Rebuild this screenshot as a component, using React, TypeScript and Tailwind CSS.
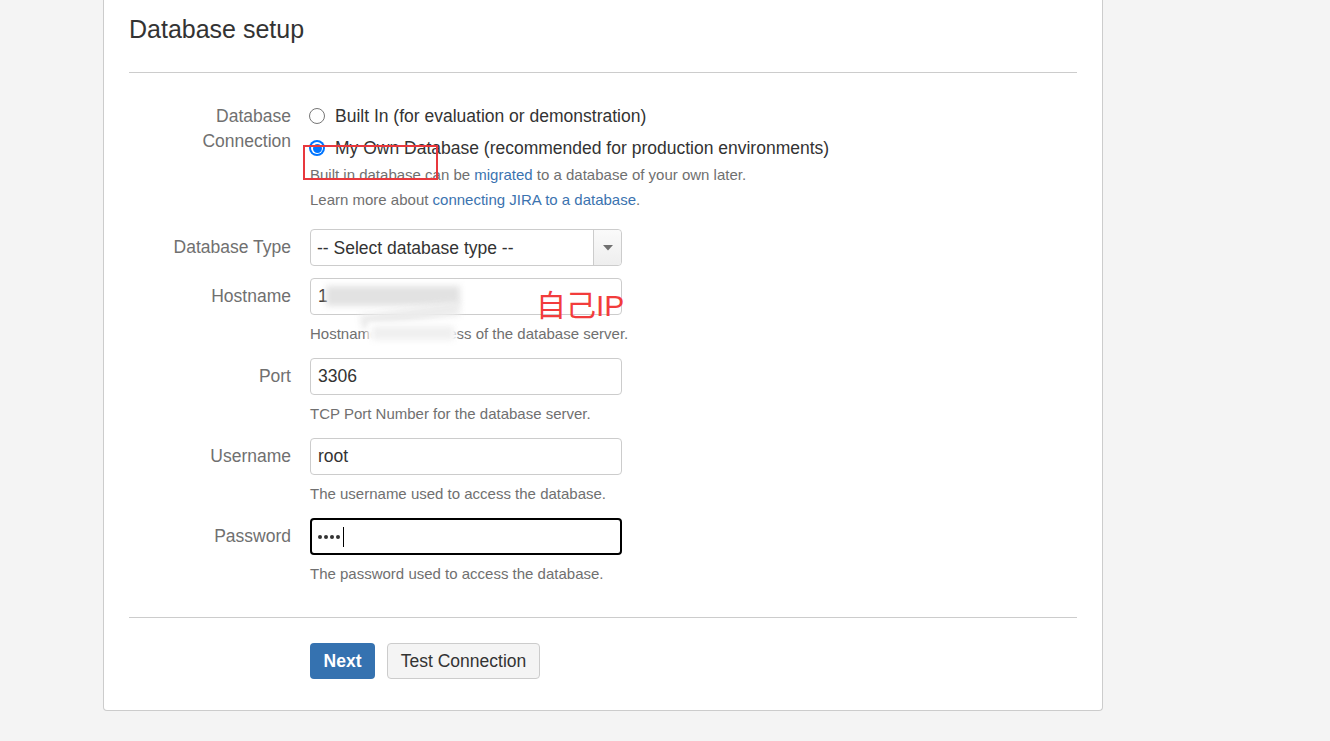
import React from "react";

const font = { fontFamily: '"Liberation Sans", Arial, "Noto Sans CJK SC", sans-serif' };

function Radio({ checked }: { checked?: boolean }) {
  return checked ? (
    <span className="flex h-[16px] w-[16px] shrink-0 items-center justify-center rounded-full bg-[#0075ff]">
      <span className="flex h-[12px] w-[12px] items-center justify-center rounded-full bg-white">
        <span className="h-[9px] w-[9px] rounded-full bg-[#0075ff]" />
      </span>
    </span>
  ) : (
    <span className="h-[16px] w-[16px] shrink-0 rounded-full border border-[#767676] bg-white" />
  );
}

function Label({ children }: { children: React.ReactNode }) {
  return (
    <div className="w-[162px] shrink-0 text-right text-[17.5px] leading-[25px] text-[#707070]">{children}</div>
  );
}

function Field({
  label,
  help,
  children,
}: {
  label: string;
  help?: React.ReactNode;
  children: React.ReactNode;
}) {
  return (
    <div className="mb-[12px] flex">
      <div className="pt-[6px]">
        <Label>{label}</Label>
      </div>
      <div className="ml-[19px] w-[312px]">
        {children}
        {help && (
          <div className="mt-[6px] whitespace-nowrap text-[15px] leading-[25px] text-[#707070]">{help}</div>
        )}
      </div>
    </div>
  );
}

function TextInput({ value }: { value: string }) {
  return (
    <div className="flex h-[37px] w-[312px] items-center rounded-[4px] border border-[#cccccc] bg-white pl-[7px] text-[17.5px] text-[#333333]">
      {value}
    </div>
  );
}

export default function App() {
  return (
    <div className="relative min-h-[741px] w-full overflow-hidden bg-[#f4f4f4]" style={font}>
      <div className="ml-[103px] w-[1000px] rounded-b-[4px] border-x border-b border-[#cccccc] bg-white px-[25px] pt-[14px] pb-[31px]">
        <h1 className="text-[25px] leading-[30px] font-normal text-[#333333]">Database setup</h1>
        <div className="mt-[28px] h-px w-full bg-[#cccccc]" />

        <div className="mt-[27px] flex">
          <div className="pt-[4px]">
            <Label>
              Database
              <br />
              Connection
            </Label>
          </div>
          <div className="ml-[18px]">
            <div className="flex h-[32px] items-center gap-[10px] text-[17.5px] text-[#333333]">
              <Radio />
              <span>Built In (for evaluation or demonstration)</span>
            </div>
            <div className="flex h-[32px] items-center gap-[10px] text-[17.5px] text-[#333333]">
              <Radio checked />
              <span>My Own Database (recommended for production environments)</span>
            </div>
            <div className="-mt-[2px] pl-[1px] text-[15px] leading-[25px] text-[#707070]">
              <div>
                Built in database can be <span className="text-[#3b73af]">migrated</span> to a database of your own later.
              </div>
              <div>
                Learn more about <span className="text-[#3b73af]">connecting JIRA to a database</span>.
              </div>
            </div>
          </div>
        </div>

        <div className="mt-[17px]">
          <Field label="Database Type">
            <div className="flex h-[37px] w-[312px] items-stretch rounded-[4px] border border-[#cccccc] bg-white">
              <div className="flex flex-1 items-center pl-[6px] pt-[1px] text-[17.5px] text-[#333333]">-- Select database type --</div>
              <div className="flex w-[28px] items-center justify-center rounded-r-[4px] border-l border-[#cccccc] bg-gradient-to-b from-[#fafafa] to-[#eeeeee]">
                <svg width="10" height="6" viewBox="0 0 10 6">
                  <path d="M0 0 L10 0 L5 5.5 Z" fill="#707070" />
                </svg>
              </div>
            </div>
          </Field>
          <Field label="Hostname" help="Hostname or IP address of the database server.">
            <TextInput value="1" />
          </Field>
          <Field label="Port" help="TCP Port Number for the database server.">
            <TextInput value="3306" />
          </Field>
          <Field label="Username" help="The username used to access the database.">
            <TextInput value="root" />
          </Field>
          <Field label="Password" help="The password used to access the database.">
            <div className="flex h-[37px] w-[312px] items-center gap-[2px] rounded-[4px] border-2 border-black bg-white pl-[6px]">
              <span className="h-[4px] w-[4px] rounded-full bg-[#333333]" />
              <span className="h-[4px] w-[4px] rounded-full bg-[#333333]" />
              <span className="h-[4px] w-[4px] rounded-full bg-[#333333]" />
              <span className="h-[4px] w-[4px] rounded-full bg-[#333333]" />
              <span className="ml-[1px] h-[20px] w-px bg-black" />
            </div>
          </Field>
        </div>

        <div className="mt-[31px] h-px w-full bg-[#cccccc]" />

        <div className="mt-[25px] flex pl-[181px]">
          <button className="h-[36px] w-[65px] rounded-[4px] bg-[#3572b0] text-[17.5px] font-bold text-white">Next</button>
          <button className="ml-[12px] h-[36px] w-[153px] rounded-[4px] border border-[#cccccc] bg-[#f4f4f4] text-[17.5px] text-[#333333]">
            Test Connection
          </button>
        </div>
      </div>

      {/* blur censor over hostname */}
      <div className="pointer-events-none absolute left-[326px] top-[286px] h-[20px] w-[134px] bg-[#e2e2e2] blur-[3px]" />
      <div className="pointer-events-none absolute left-[360px] top-[308px] h-[14px] w-[100px] -rotate-[8deg] bg-[#ececec] blur-[3px]" />
      <div className="pointer-events-none absolute left-[368px] top-[322px] h-[22px] w-[88px] bg-white blur-[2px]" />
      <div className="pointer-events-none absolute left-[372px] top-[326px] h-[14px] w-[82px] bg-[#f0f0f0] blur-[3px]" />

      {/* red annotations */}
      <div className="pointer-events-none absolute left-[303px] top-[145px] h-[35px] w-[135px] border-2 border-[#e8383d]" />
      <div className="pointer-events-none absolute left-[536px] top-[287px] text-[30px] leading-[38px] text-[#f23c3c]" style={font}>
        自己IP
      </div>
    </div>
  );
}
